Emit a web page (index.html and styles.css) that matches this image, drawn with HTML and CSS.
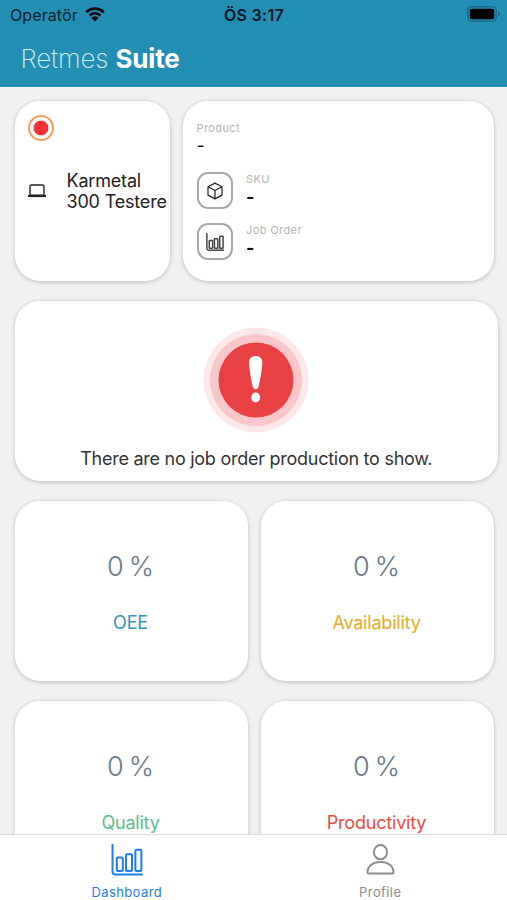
FILE: index.html
```html
<!DOCTYPE html>
<html lang="en">
<head>
<meta charset="utf-8">
<meta name="viewport" content="width=device-width, initial-scale=1">
<title>Retmes Suite</title>
<link rel="stylesheet" href="styles.css">
</head>
<body>
<svg class="defs" aria-hidden="true">
  <symbol id="bars" viewBox="0 0 32 32">
    <path d="M1.5 1v26.5a3 3 0 0 0 3 3H31"/>
    <rect x="5.8" y="13.4" width="6" height="13.6" rx="1"/>
    <rect x="15" y="10.2" width="6" height="16.8" rx="1"/>
    <rect x="24.4" y="5.8" width="6" height="21.2" rx="1"/>
  </symbol>
</svg>
<div class="app">
  <header class="header">
    <div class="status">
      <div class="carrier">
        <span class="carrier-name">Operatör</span>
        <svg class="wifi" viewBox="0 0 20 15">
          <path class="wave" d="M1.3 5.2a12.4 12.4 0 0 1 17.4 0M4.5 8.5a7.9 7.9 0 0 1 11 0"/>
          <path d="M6.3 10.7a5.3 5.3 0 0 1 7.4 0L10 14.4z"/>
        </svg>
      </div>
      <span class="time">ÖS 3:17</span>
      <svg class="battery" viewBox="0 0 33 16">
        <rect class="battery-shell" x=".8" y=".8" width="28.4" height="14.4" rx="4"/>
        <rect x="2.8" y="2.8" width="24.4" height="10.4" rx="2"/>
        <path class="battery-tip" d="M31 5.6q2 .6 2 2.4t-2 2.4z"/>
      </svg>
    </div>
    <h1 class="brand"><span>Retmes</span> <b>Suite</b></h1>
  </header>

  <main class="content">
    <section class="top">
      <article class="card machine">
        <i class="signal"></i>
        <div class="machine-row">
          <svg class="laptop" viewBox="0 0 18 14">
            <rect x="2" y="1" width="14" height="10.3" rx="1.4"/>
            <path class="laptop-base" d="M0 12h18"/>
          </svg>
          <p class="machine-name">Karmetal<br>300 Testere</p>
        </div>
      </article>
      <article class="card order">
        <div class="product">
          <span class="label">Product</span>
          <span class="value">-</span>
        </div>
        <div class="detail">
          <span class="tile">
            <svg class="cube" viewBox="0 0 18 18"><path d="M9 1.1l7 3.6v8.4l-7 3.8-7-3.8V4.7zM2 4.7l7 3.8 7-3.8M9 8.5v8.4"/></svg>
          </span>
          <div class="pair"><span class="label">SKU</span><b class="value">-</b></div>
        </div>
        <div class="detail">
          <span class="tile"><svg class="mini-bars"><use href="#bars"/></svg></span>
          <div class="pair"><span class="label">Job Order</span><b class="value">-</b></div>
        </div>
      </article>
    </section>

    <section class="card notice">
      <svg class="alert" viewBox="0 0 106 106">
        <circle class="ring-outer" cx="53" cy="53" r="52.5"/>
        <circle class="ring-inner" cx="53" cy="53" r="46"/>
        <circle class="disc" cx="53" cy="53" r="37.5"/>
        <path class="mark" d="M52.7 29c4.3 0 7 2.7 6.6 7.2-.6 8.5-2.2 17.5-3.7 23.3-.8 3.7-5 3.7-5.8 0-1.5-5.8-3.1-14.8-3.7-23.3-.4-4.5 2.3-7.2 6.600-7.200z"/>
        <ellipse class="mark" cx="52.7" cy="70.5" rx="4.4" ry="4.9"/>
      </svg>
      <p class="notice-text">There are no job order production to show.</p>
    </section>

    <section class="metrics">
      <article class="card metric"><span class="percent">0 %</span><span class="name oee">OEE</span></article>
      <article class="card metric"><span class="percent">0 %</span><span class="name availability">Availability</span></article>
      <article class="card metric"><span class="percent">0 %</span><span class="name quality">Quality</span></article>
      <article class="card metric"><span class="percent">0 %</span><span class="name productivity">Productivity</span></article>
    </section>
  </main>

  <nav class="tabs">
    <a class="tab active"><svg class="tab-icon"><use href="#bars"/></svg><span>Dashboard</span></a>
    <a class="tab"><svg class="tab-icon" viewBox="0 0 32 32"><ellipse cx="16.5" cy="8.2" rx="6.6" ry="7.1"/><path d="M3.500 28.200c0-6.400 5.600-10.200 13-10.200s13 3.800 13 10.200q0 1.300-1.300 1.300H4.800q-1.300 0-1.300-1.300z"/></svg><span>Profile</span></a>
  </nav>
</div>
</body>
</html>
```
FILE: styles.css
```css
* { box-sizing: border-box; }

body {
  margin: 0;
  font-family: Inter, "Liberation Sans", sans-serif;
  color: #222;
}

.defs { display: none; }

symbol, .tab-icon, .mini-bars { fill: none; stroke: currentColor; stroke-linejoin: round; stroke-linecap: round; }

.app {
  display: flex;
  flex-direction: column;
  height: 900px;
  overflow: hidden;
  background: #f0f0f1;
}

.header {
  flex: none;
  height: 87px;
  background: #238eb3;
}

.status {
  display: grid;
  grid-template-columns: 1fr auto 1fr;
  align-items: center;
  height: 30px;
  padding: 0 7px 0 10px;
  font-size: 16px;
  color: #06202b;
}

.carrier { display: flex; align-items: center; gap: 7px; }
.carrier-name { letter-spacing: .1px; }
.wifi { width: 20px; height: 15px; margin-top: -2px; fill: #000; }
.wave { fill: none; stroke: #000; stroke-width: 2.7; }
.time { margin-left: -2px; font-weight: 600; letter-spacing: .3px; color: #03151d; }
.battery { justify-self: end; width: 33px; height: 16px; margin-top: -2px; fill: #000; }
.battery-shell { fill: none; stroke: #1a6985; stroke-width: 1.5; }
.battery .battery-tip { fill: #1a6985; }

.brand {
  margin: 13px 0 0 20.5px;
  font-size: 26px;
  line-height: 32px;
  font-weight: 200;
  letter-spacing: -.15px;
  color: #fff;
}
.brand span { color: #d6f1fa; }
.brand b { font-weight: 700; }

.content {
  flex: 1;
  min-height: 0;
  overflow: hidden;
  padding: 13.5px 9px 0 14.5px;
}

.card {
  background: #fff;
  border-radius: 25px;
  box-shadow: 0 1px 4px rgba(0, 0, 0, .22);
  height: 180px;
}

.top {
  display: grid;
  grid-template-columns: 155px 311px;
  gap: 13px;
}

.machine { padding: 14px 0 0 13.5px; }
.signal {
  display: block;
  width: 26px;
  height: 26px;
  border: 2px solid #f1a05b;
  border-radius: 50%;
  background: radial-gradient(circle, #fb3032 7px, #fff 7.8px);
}
.machine-row { display: flex; align-items: center; gap: 20.5px; margin-top: 29px; }
.laptop { flex: none; width: 18px; height: 14px; fill: none; stroke: #222; stroke-width: 1.4; }
.laptop-base { stroke-width: 2.2; }
.machine-name { margin: 0; font-size: 18px; line-height: 21.5px; letter-spacing: -.18px; white-space: nowrap; }

.order { padding: 20.5px 14px 0; }
.label { display: block; font-size: 11px; line-height: 14px; letter-spacing: .4px; color: #b4b4b4; }
.value { display: block; font-size: 18px; line-height: 22px; color: #111; }
.product { height: 51px; }
.detail { display: flex; gap: 13.5px; height: 51.3px; }
.tile {
  display: grid;
  place-items: center;
  width: 36px;
  height: 37px;
  border: 2px solid #a8a8a8;
  border-radius: 11px;
}
.cube { width: 18px; height: 18px; fill: none; stroke: #222; stroke-width: 1.2; stroke-linejoin: round; }
.mini-bars { width: 18px; height: 18px; stroke-width: 2.6; color: #444; }

.notice {
  display: flex;
  flex-direction: column;
  align-items: center;
  margin-top: 20.5px;
  padding-top: 26px;
}
.alert { width: 106px; height: 106px; }
.ring-outer { fill: #fde8e9; }
.ring-inner { fill: #f9c6c9; }
.disc { fill: #e84043; }
.mark { fill: #fff; }
.notice-text { margin: 14px 0 0; font-size: 18px; line-height: 24px; letter-spacing: -.26px; color: #333; white-space: nowrap; }

.metrics {
  display: grid;
  grid-template-columns: 233px 233px;
  gap: 20px 13px;
  margin-top: 20px;
}
.metric { display: flex; flex-direction: column; align-items: center; padding: 48.5px 1px 0 0; }
.percent { font-size: 27px; line-height: 34px; color: #65788b; font-weight: 350; letter-spacing: -.2px; word-spacing: -2px; }
.name { margin-top: 27px; font-size: 18px; line-height: 24px; letter-spacing: -.2px; }
.oee { color: #3096b8; }
.availability { color: #e6ab28; }
.quality { color: #5dbb91; }
.productivity { color: #eb4b43; }

.tabs {
  flex: none;
  display: grid;
  grid-template-columns: 1fr 1fr;
  height: 66px;
  background: #fff;
  border-top: 1px solid #dedede;
}
.tab {
  display: flex;
  flex-direction: column;
  align-items: center;
  padding-top: 9px;
  font-size: 13px;
  line-height: 16px;
  letter-spacing: .4px;
  color: #8c8c8c;
}
.tab-icon { width: 32px; height: 32px; stroke-width: 2; }
.tab span { margin-top: 8px; }
.active { color: #1c7df2; }
```
